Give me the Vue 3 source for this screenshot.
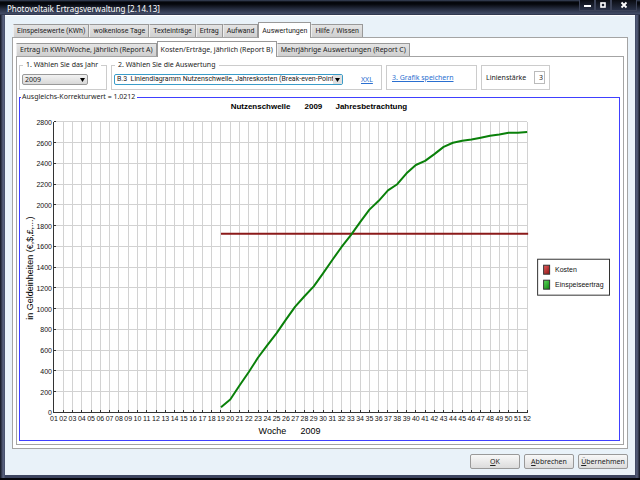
<template>
  <div class="window">
    <!-- Titelleiste -->
    <header class="titlebar">
      <h1 class="title">Photovoltaik Ertragsverwaltung [2.14.13]</h1>
      <div class="win-buttons">
        <button type="button" aria-label="Minimieren">
          <svg width="9" height="8" viewBox="0 0 9 8"><rect x="1" y="4" width="7" height="2" fill="#fff" /></svg>
        </button>
        <button type="button" aria-label="Maximieren">
          <svg width="8" height="8" viewBox="0 0 8 8"><rect x="2" y="2" width="4" height="4" fill="none" stroke="#fff" stroke-width="1.6" /></svg>
        </button>
        <button type="button" class="close" aria-label="Schließen">
          <svg width="8" height="8" viewBox="0 0 8 8"><path d="M1.5 1.5L6.5 6.5M6.5 1.5L1.5 6.5" stroke="#fff" stroke-width="1.8" /></svg>
        </button>
      </div>
    </header>

    <main class="body">
      <nav class="tabs main">
        <button
          v-for="tab in mainTabs"
          :key="tab"
          type="button"
          :class="['tab', { active: tab === mainTab }]"
          @click="mainTab = tab"
        >{{ tab }}</button>
      </nav>

      <div class="panel outer">
        <nav class="tabs sub">
          <button
            v-for="tab in reportTabs"
            :key="tab"
            type="button"
            :class="['tab', { active: tab === reportTab }]"
            @click="reportTab = tab"
          >{{ tab }}</button>
        </nav>

        <div class="panel inner">
          <!-- Auswahl -->
          <div class="toolbar">
            <fieldset class="group year">
              <legend><label for="jahr">1. Wählen Sie das Jahr</label></legend>
              <div class="select">
                <select id="jahr" v-model="year">
                  <option>2009</option>
                  <option>2008</option>
                </select>
                <svg class="arrow" width="7" height="4" viewBox="0 0 7 4"><path d="M1 0h5L3.5 4z" fill="#000" /></svg>
              </div>
            </fieldset>
            <fieldset class="group report">
              <legend><label for="auswertung">2. Wählen Sie die Auswertung</label></legend>
              <div class="select focus">
                <select id="auswertung" v-model="report">
                  <option v-for="r in reports" :key="r" :value="r">{{ r }}</option>
                </select>
                <span class="arrow-box">
                  <svg width="7" height="4" viewBox="0 0 7 4"><path d="M1 0h5L3.5 4z" fill="#000" /></svg>
                </span>
              </div>
              <a href="#">XXL</a>
            </fieldset>
            <div class="group save"><a href="#">3. Grafik speichern</a></div>
            <div class="group line-width">
              <label for="staerke">Linienstärke</label>
              <input id="staerke" v-model="lineWidth" type="text" />
            </div>
          </div>

          <!-- Diagramm -->
          <fieldset class="chart">
            <legend>Ausgleichs-Korrekturwert = 1.0212</legend>
            <svg class="plot" viewBox="20 101 600 339" role="img" aria-label="Nutzenschwelle 2009">
              <g class="chart-title">
                <text x="231" y="108">Nutzenschwelle</text>
                <text x="305" y="108">{{ year }}</text>
                <text x="336" y="108">Jahresbetrachtung</text>
              </g>
              <g shape-rendering="crispEdges">
                <line v-for="w in weeks" :key="'v' + w" class="grid" :x1="px(w)" :x2="px(w)" y1="121" y2="412" />
                <line v-for="v in steps" :key="'h' + v" class="grid" x1="54" x2="528" :y1="py(v)" :y2="py(v)" />
                <line class="axis" x1="54" x2="54" y1="121" y2="413" />
                <line class="axis" x1="54" x2="529" y1="412" y2="412" />
                <line v-for="w in weeks" :key="'t' + w" class="axis" :x1="px(w)" :x2="px(w)" y1="410" y2="413" />
                <line v-for="v in steps" :key="'s' + v" class="axis" x1="54" x2="56" :y1="py(v)" :y2="py(v)" />
              </g>
              <g class="label y-label">
                <text v-for="v in steps" :key="v" x="52" :y="py(v) + 3">{{ v }}</text>
              </g>
              <g class="label x-label">
                <text v-for="w in weeks" :key="w" :x="px(w)" y="421">{{ String(w).padStart(2, '0') }}</text>
              </g>
              <g class="axis-title">
                <text x="259" y="434">Woche</text>
                <text x="301" y="434">{{ year }}</text>
                <text transform="translate(33 319) rotate(-90)">in Geldeinheiten (€,$,£,...)</text>
              </g>
              <line :x1="px(19)" x2="529" :y1="py(costs)" :y2="py(costs)" stroke="#8b1a1a" stroke-width="2" />
              <polyline :points="yieldLine" fill="none" stroke="#0a800a" stroke-width="2" stroke-linejoin="round" />

              <!-- Legende -->
              <defs>
                <linearGradient id="red" x2="1" y2="1"><stop stop-color="#e86060" /><stop offset="1" stop-color="#8c1010" /></linearGradient>
                <linearGradient id="green" x2="1" y2="1"><stop stop-color="#60e060" /><stop offset="1" stop-color="#0c800c" /></linearGradient>
              </defs>
              <rect x="538.5" y="258.5" width="72" height="36" fill="#fff" stroke="#333" />
              <rect x="544.5" y="264.5" width="6" height="9" fill="url(#red)" stroke="#333" />
              <rect x="544.5" y="279.5" width="6" height="9" fill="url(#green)" stroke="#333" />
              <g class="label">
                <text x="556" y="271">Kosten</text>
                <text x="556" y="286">Einspeiseertrag</text>
              </g>
            </svg>
          </fieldset>
        </div>
      </div>

      <footer class="actions">
        <button type="button"><u>O</u>K</button>
        <button type="button"><u>A</u>bbrechen</button>
        <button type="button"><u>Ü</u>bernehmen</button>
      </footer>
    </main>
  </div>
</template>

<script setup>
import { ref, computed } from 'vue'

const mainTabs = ['Einspeisewerte (KWh)', 'wolkenlose Tage', 'Texteinträge', 'Ertrag', 'Aufwand', 'Auswertungen', 'Hilfe / Wissen']
const mainTab = ref('Auswertungen')

const reportTabs = [
  'Ertrag in KWh/Woche, jährlich (Report A)',
  'Kosten/Erträge, jährlich (Report B)',
  'Mehrjährige Auswertungen (Report C)'
]
const reportTab = ref(reportTabs[1])

const reports = ['B.3\u00a0 Liniendiagramm Nutzenschwelle, Jahreskosten (Break-even-Point)']
const report = ref(reports[0])
const year = ref('2009')
const lineWidth = ref('3')

// Achsen
const weeks = Array.from({ length: 52 }, (_, i) => i + 1)
const steps = Array.from({ length: 15 }, (_, i) => i * 200)
const px = (week) => 54 + ((week - 1) * 474) / 51
const py = (value) => 412 - (value * 291) / 2800

// Kosten und aufsummierter Einspeiseertrag ab Woche 19
const costs = 1723
const yields = [
  50, 125, 260, 390, 530, 650, 765, 895, 1020, 1120, 1215, 1340,
  1470, 1595, 1710, 1835, 1955, 2040, 2140, 2200, 2305, 2385, 2425, 2490,
  2560, 2600, 2618, 2630, 2648, 2668, 2680, 2697, 2697, 2704
]
const yieldLine = computed(() => yields.map((v, i) => `${px(i + 19)},${py(v)}`).join(' '))
</script>

<style>
body {
  margin: 0;
  background: #10141f;
}
</style>

<style scoped>
.window {
  box-sizing: border-box;
  display: flex;
  flex-direction: column;
  min-height: 100vh;
  padding: 0 5px 3px;
  font: 7px/10px "Noto Sans", sans-serif;
  color: #222;
  background: linear-gradient(90deg, #10141f, #565f7c 3px, #565f7c 4px, #3c4560 5px, #3c4560 calc(100% - 5px), #565f7c calc(100% - 3px), #10141f);
  border-bottom: 2px solid #05070c;
}
button, select, input {
  font: inherit;
  color: inherit;
  margin: 0;
}

/* Titelleiste */
.titlebar {
  display: flex;
  justify-content: space-between;
  height: 15px;
  margin: 0 -5px;
  padding: 0 3px 0 7px;
  background: linear-gradient(#3c4860, #05070c 2px, #05070c 4px, #262d40 9px, #434d68 14px, #20263a);
}
.title {
  margin: 0;
  font-size: 8px;
  line-height: 17px;
  font-weight: normal;
  color: #fff;
}
.win-buttons {
  display: flex;
  height: 11px;
}
.win-buttons button {
  display: flex;
  align-items: center;
  justify-content: center;
  width: 16px;
  padding: 0;
  border: 1px solid #3c4358;
  border-top: 0;
  background: linear-gradient(#0a0c12, #283046);
}
.win-buttons .close {
  width: 26px;
}

.body {
  flex: 1;
  padding: 7px 7px 0;
  background: #e9f2f9;
  border-top: 1px solid #fff;
}

/* Reiter */
.tabs {
  display: flex;
  align-items: flex-end;
  height: 15px;
}
.tabs.main {
  height: 14px;
  padding-left: 1px;
  font-family: Roboto, sans-serif;
}
.tab {
  height: 13px;
  padding: 0 3px;
  border: 1px solid #999;
  border-bottom: 0;
  border-left-color: #eee;
  background: linear-gradient(#e4e4e4, #cfcfcf);
  line-height: 12px;
  white-space: nowrap;
}
.tab.active {
  height: 16px;
  margin-bottom: -1px;
  border-left-color: #999;
  background: #fff;
  position: relative;
}
.panel {
  border: 1px solid #a4a4a4;
  background: #fff;
}
.panel.outer {
  padding: 3px;
}
.panel.inner {
  padding: 3px 3px 3px 2px;
}

/* Auswahl */
.toolbar {
  display: flex;
  gap: 4px;
  height: 30px;
}
.group {
  box-sizing: border-box;
  display: flex;
  align-items: center;
  min-width: 0;
  margin: 5px 0 0;
  padding: 0 4px;
  border: 1px solid #ccc;
}
fieldset.group {
  margin-top: 0;
  padding: 0 2px;
}
.group legend {
  margin-left: 1px;
  padding: 0 3px;
}
.year {
  flex: 0 1 88px;
}
.report {
  flex: 0 1 271px;
}
.save {
  flex: 0 1 91px;
  padding-left: 5px;
}
.line-width {
  flex: 0 1 69px;
  justify-content: space-between;
}
a {
  color: #2a6fd0;
}
.report a {
  margin-left: 18px;
}
.select {
  position: relative;
  width: 66px;
}
.focus {
  width: 229px;
}
select {
  display: block;
  box-sizing: border-box;
  width: 100%;
  height: 11px;
  padding: 0 9px 0 2px;
  border: 1px solid #999;
  border-radius: 2px;
  appearance: none;
  line-height: 9px;
  white-space: pre;
  background: linear-gradient(#f2f2f2, #d8d8d8);
}
.focus select {
  border-color: #3a9cc8;
  background: #fff;
  font-family: Roboto, sans-serif;
}
.arrow {
  position: absolute;
  top: 4px;
  right: 2px;
  pointer-events: none;
}
.arrow-box {
  position: absolute;
  top: 1px;
  right: 1px;
  bottom: 1px;
  display: flex;
  align-items: center;
  padding: 0 1px;
  background: #e0e0e0;
  pointer-events: none;
}
input {
  box-sizing: border-box;
  width: 11px;
  height: 13px;
  padding: 0 1px 0 0;
  border: 1px solid #bbb;
  text-align: right;
}

/* Diagramm */
.chart {
  min-width: 0;
  margin: 2px 0 0;
  padding: 0;
  border: 1px solid #4040ff;
}
.chart legend {
  margin-left: 1px;
  padding: 0 2px 0 1px;
}
.plot {
  display: block;
  width: 100%;
  font-family: "Liberation Sans", Arial, sans-serif;
}
.chart-title {
  font-size: 8px;
  font-weight: bold;
  fill: #000;
}
.axis-title {
  font-size: 9px;
}
.label {
  font-size: 7px;
  fill: #111;
}
.x-label {
  text-anchor: middle;
}
.y-label {
  text-anchor: end;
}
.grid {
  stroke: #d2d2d2;
}
.axis {
  stroke: #333;
}

/* Schaltflächen */
.actions {
  display: flex;
  justify-content: flex-end;
  gap: 4px;
  padding: 5px 0;
}
.actions button {
  width: 50px;
  height: 15px;
  padding: 0;
  border: 1px solid #999;
  border-radius: 2px;
  background: linear-gradient(#f8f8f8, #dcdcdc);
}
</style>
